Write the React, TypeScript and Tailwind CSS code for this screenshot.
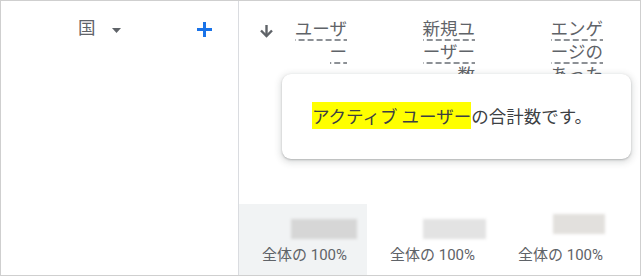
import React from "react";

const FONT = "font-['Roboto','Noto_Sans_CJK_JP',sans-serif]";

// dashed underline on every wrapped line of a header label
const dashed =
  "bg-[linear-gradient(to_right,#8d9196_6px,transparent_6px)] bg-[length:9px_2px] bg-repeat-x bg-bottom [box-decoration-break:clone] [-webkit-box-decoration-break:clone] pb-[2px]";

const columns = [
  { label: "ユーザー", sorted: true, blur: "w-[66px] mt-[15px] mr-[-10px] bg-[#d6d6d6]" },
  { label: "新規ユーザー数", sorted: false, blur: "w-[63px] mt-[15px] mr-[-11px] bg-[#e3e3e3]" },
  { label: "エンゲージのあったセッション数", sorted: false, blur: "w-[52px] mt-[10px] mr-[-2px] bg-[#e2e0dd]" },
];

function HeaderCell({ label, sorted }: { label: string; sorted: boolean }) {
  return (
    <div className="w-[128px] shrink-0 flex pr-[20px] overflow-hidden">
      {sorted && (
        <svg className="ml-[20px] mt-[22px] w-[15px] h-[15px] shrink-0" viewBox="0 0 15 15" fill="none" stroke="#5f6368" strokeWidth={2.4}>
          <path d="M7.5 2v11" />
          <path d="M2 7.5l5.5 5.5 5.5-5.5" />
        </svg>
      )}
      <div className="ml-auto w-[54px] text-right text-[17.5px] [line-height:23px] text-[#5f6368] pt-[17px] break-all">
        <span className={dashed}>{label}</span>
      </div>
    </div>
  );
}

export default function App() {
  return (
    <div className={`w-[641px] h-[276px] border border-[#cfcfcf] bg-white flex relative overflow-hidden ${FONT}`}>
      {/* left dimension panel */}
      <div className="w-[238px] shrink-0 border-r border-[#dadce0]">
        <div className="h-[56px] flex items-center">
          <span className="ml-[77px] text-[17.5px] text-[#5f6368] leading-none">国</span>
          <svg className="ml-[16px] mt-[2px] w-[9px] h-[5px]" viewBox="0 0 9 5">
            <path d="M0 0h9L4.5 5z" fill="#5f6368" />
          </svg>
          <svg className="ml-auto mr-[26px] w-[15px] h-[15px]" viewBox="0 0 15 15">
            <rect x="6" y="0" width="3" height="15" fill="#1a73e8" />
            <rect x="0" y="6" width="15" height="3" fill="#1a73e8" />
          </svg>
        </div>
      </div>

      {/* metric columns */}
      <div className="flex-1 flex flex-col">
        <div className="h-[203px] flex">
          {columns.map(c => (
            <HeaderCell key={c.label} label={c.label} sorted={c.sorted} />
          ))}
        </div>
        <div className="flex-1 flex">
          {columns.map(c => (
            <div
              key={c.label}
              className={`w-[128px] shrink-0 flex flex-col items-end pr-[20px] ${c.sorted ? "bg-[#f1f3f4]" : ""}`}
            >
              <div className={`h-[20px] blur-[1.5px] ${c.blur}`} />
              <div className="mt-[auto] mb-[10px] text-[15px] [line-height:20px] text-[#5f6368] whitespace-nowrap">全体の 100%</div>
            </div>
          ))}
        </div>
      </div>

      {/* description tooltip */}
      <div className="absolute left-[281px] top-[73px] w-[349px] h-[85px] bg-white rounded-[9px] shadow-[0_1px_2px_rgba(60,64,67,0.3),0_2px_6px_2px_rgba(60,64,67,0.15)] flex items-center pl-[30px]">
        <p className="text-[17.5px] text-[#3c4043] whitespace-nowrap font-['Noto_Sans_CJK_JP',sans-serif]">
          <span className="bg-[#ffff00] py-[1px]">アクティブ ユーザー</span>の合計数です。
        </p>
      </div>
    </div>
  );
}
